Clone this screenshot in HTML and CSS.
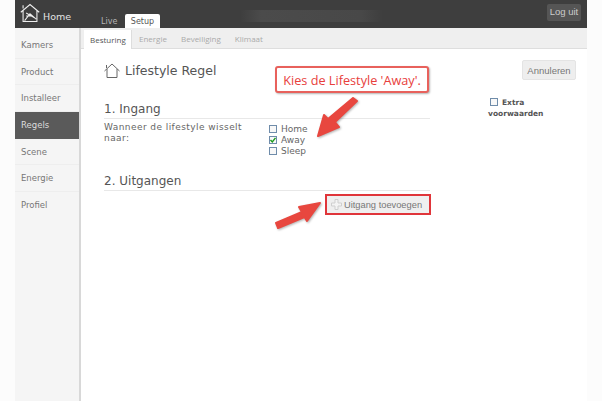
FILE: index.html
```html
<!DOCTYPE html>
<html lang="nl">
<head>
<meta charset="utf-8">
<title>Lifestyle Regel</title>
<link rel="stylesheet" href="styles.css">
</head>
<body>
<div class="app">
  <header class="topbar">
    <div class="brand">
      <svg class="brand-icon" viewBox="0 0 26 26" width="20" height="20"><path d="M1 12 L13 2 L25 12 M4 10 V24 H22 V10 M4 3 V7 M8 13 L20 20 M6 23 L13 14 L21 21 M8 17 H14" fill="none" stroke="#eee" stroke-width="1.4"/></svg>
      <span class="brand-name">Home</span>
    </div>
    <nav class="main-tabs">
      <span class="main-tab">Live</span>
      <span class="main-tab main-tab-on">Setup</span>
    </nav>
    <div class="blurred"></div>
    <span class="logout">Log uit</span>
  </header>
  <div class="body">
    <nav class="side">
      <a class="side-item">Kamers</a>
      <a class="side-item">Product</a>
      <a class="side-item">Installeer</a>
      <a class="side-item side-on">Regels</a>
      <a class="side-item">Scene</a>
      <a class="side-item">Energie</a>
      <a class="side-item side-last">Profiel</a>
    </nav>
    <main class="panel">
      <div class="sub-tabs">
        <span class="sub-tab sub-tab-on">Besturing</span>
        <span class="sub-tab">Energie</span>
        <span class="sub-tab">Beveiliging</span>
        <span class="sub-tab">Klimaat</span>
      </div>
      <div class="content">
        <div class="form">
          <h1 class="title">
            <svg class="title-icon" viewBox="0 0 16 15" width="16" height="15"><path d="M0.5 8 L8 1 L15.5 8 M3 6 V14.5 H13 V6 M2.5 2 V5" fill="none" stroke="#666" stroke-width="1"/></svg>
            Lifestyle Regel
          </h1>
          <h2 class="section first">1. Ingang</h2>
          <div class="row">
            <p class="question">Wanneer de lifestyle wisselt naar:</p>
            <ul class="checks">
              <li class="check-row"><span class="box"></span>Home</li>
              <li class="check-row"><span class="box"><svg viewBox="0 0 8 8" width="8" height="8"><path d="M1.5 4 L3.3 6 L6.5 1.8" fill="none" stroke="#1a9a1a" stroke-width="1.4"/></svg></span>Away</li>
              <li class="check-row"><span class="box"></span>Sleep</li>
            </ul>
          </div>
          <h2 class="section second">2. Uitgangen</h2>
          <div class="add-row">
            <span class="add">
              <svg viewBox="0 0 11 11" width="11" height="11"><path d="M4 0.5 H7 V4 H10.5 V7 H7 V10.5 H4 V7 H0.5 V4 H4 Z" fill="#f4f4f4" stroke="#cfcfcf"/></svg>
              Uitgang toevoegen
            </span>
          </div>
        </div>
        <aside class="aside">
          <span class="cancel">Annuleren</span>
          <div class="extra"><span class="box extra-box"></span>Extra<br>voorwaarden</div>
        </aside>
      </div>
    </main>
  </div>
</div>
<div class="callout">Kies de Lifestyle 'Away'.</div>
<svg class="arrows" viewBox="0 0 602 401" width="602" height="401">
  <path d="M357 101 L335 122 L339 127 L318 136 L324 115 L328 119 L353 98 Z" fill="#e8473f" stroke="#e8473f" stroke-width="2" stroke-linejoin="round"/>
  <path d="M276 223 L302 212 L299 207 L320 203 L307 221 L304.500 217 L278 228 Z" fill="#e8473f" stroke="#e8473f" stroke-width="2" stroke-linejoin="round"/>
</svg>
</body>
</html>
```
FILE: styles.css
```css
* { box-sizing: border-box; }
html, body { margin: 0; height: 100%; overflow: hidden; }
body {
  background: #fcfcfc;
  color: #555;
  font-family: "DejaVu Sans", sans-serif;
  font-size: 9px;
  position: relative;
}
.app {
  margin-left: 15px;
  width: 572px;
  height: 401px;
  display: flex;
  flex-direction: column;
}
.topbar {
  height: 28px;
  flex: none;
  background: #3e3e3e;
  display: flex;
  align-items: flex-start;
}
.brand {
  width: 86px;
  padding: 3px 0 0 5px;
  display: flex;
  align-items: center;
  gap: 3px;
  flex: none;
}
.brand-name { color: #e4e4e4; font-size: 9.500px; padding-top: 6px; }
.main-tabs { display: flex; align-items: flex-end; height: 28px; flex: none; }
.main-tab {
  height: 14px;
  line-height: 15px;
  padding: 0 6px 0 0;
  font-size: 8px;
  color: #b5b5b5;
}
.main-tab:first-child { width: 24px; padding-left: 0; }
.main-tab-on {
  width: 35px;
  background: #fff;
  color: #555;
  text-align: center;
  padding: 0;
  border-radius: 2px 2px 0 0;
}
.blurred {
  width: 143px;
  height: 12px;
  margin: 10px 0 0 80px;
  background: linear-gradient(90deg, #3e3e3e, #4b4b4b 15%, #484848 85%, #3e3e3e);
  flex: none;
}
.logout {
  margin: 4px 6px 0 auto;
  width: 34px;
  height: 17px;
  line-height: 16px;
  text-align: center;
  background: #555;
  color: #ccc;
  border-radius: 2px;
  font-size: 9.500px;
  font-family: "Liberation Sans", sans-serif;
}
.body { flex: 1; display: flex; min-height: 0; }
.side {
  width: 66px;
  flex: none;
  background: #f5f5f5;
  border-right: 2px solid #d8d8d8;
  padding-top: 4px;
  display: flex;
  flex-direction: column;
}
.side-item {
  height: 26.670px;
  line-height: 26px;
  padding-left: 6px;
  border-bottom: 1px solid #eee;
  color: #777;
  font-size: 8.500px;
}
.side-last { border-bottom: 0; }
.side-on { background: #5a5a5a; color: #ddd; border-bottom: 0; }
.panel { flex: 1; display: flex; flex-direction: column; background: #fff; min-width: 0; }
.sub-tabs {
  height: 21px;
  flex: none;
  background: #efefef;
  border-bottom: 1px solid #dedede;
  display: flex;
  align-items: flex-end;
  padding-left: 3px;
  font-family: "Open Sans", sans-serif;
  font-size: 8px;
  color: #aaa;
}
.sub-tab { height: 18px; line-height: 18px; padding: 0 7px; }
.sub-tab-on {
  background: #fff;
  color: #555;
  height: 19px;
  width: 48px;
  margin-bottom: -1px;
  padding: 0 0 0 6px;
  border-right: 1px solid #ddd;
  line-height: 20px;
}
.content { flex: 1; display: flex; }
.form { width: 349px; padding: 13px 0 0 23px; flex: none; }
.title {
  margin: 0;
  font-size: 12.500px;
  font-weight: 400;
  color: #555;
  display: flex;
  align-items: center;
  gap: 5px;
  height: 16px;
}
.section {
  margin: 0;
  font-size: 12px;
  font-weight: 400;
  color: #555;
  border-bottom: 1px solid #e8e8e8;
  height: 19px;
  line-height: 18px;
}
.first { margin-top: 22px; }
.second { margin-top: 16px; }
.row { display: flex; padding-top: 3px; }
.question { margin: 0; width: 165px; padding-right: 20px; line-height: 10.500px; font-size: 9px; letter-spacing: .43px; color: #666; }
.checks { margin: 0; padding: 1px 0 0 0; list-style: none; }
.check-row { display: flex; align-items: center; height: 11px; gap: 4px; color: #666; }
.box {
  width: 8px;
  height: 8px;
  border: 1px solid #6f8caa;
  background: #f8f8f8;
  display: inline-flex;
  align-items: center;
  justify-content: center;
  flex: none;
}
.box svg { flex: none; margin: -1px; }
.add-row { display: flex; justify-content: flex-end; padding-top: 3px; }
.add {
  width: 106px;
  height: 21px;
  border: 2px solid #e0353a;
  background: #efefef;
  color: #777;
  display: flex;
  align-items: center;
  gap: 2px;
  padding-left: 4px;
  font-family: "Liberation Sans", sans-serif;
  font-size: 9.300px;
  margin-right: -1px;
}
.aside { flex: 1; display: flex; flex-direction: column; padding-top: 11px; }
.cancel {
  align-self: flex-end;
  margin-right: 11px;
  width: 54px;
  height: 20px;
  line-height: 19px;
  text-align: center;
  background: #eee;
  border: 1px solid #e4e4e4;
  border-radius: 2px;
  color: #777;
  font-family: "Liberation Sans", sans-serif;
  font-size: 9.500px;
}
.extra {
  margin: 17px 0 0 58px;
  font-weight: 700;
  font-size: 7.500px;
  line-height: 11px;
  color: #555;
}
.extra-box { margin: 0 4px 0 2px; vertical-align: -1px; }
.callout {
  position: absolute;
  left: 275px;
  top: 66px;
  width: 154px;
  height: 27px;
  line-height: 25px;
  text-align: center;
  background: #fff;
  border: 2px solid #e8615c;
  border-radius: 3px;
  box-shadow: 1px 1px 2px rgba(0,0,0,.3);
  color: #e8403c;
  font-family: "Open Sans", sans-serif;
  font-size: 12.700px;
}
.arrows { position: absolute; left: 0; top: 0; pointer-events: none; filter: drop-shadow(1px 1px 1px rgba(0,0,0,.3)); }
```
